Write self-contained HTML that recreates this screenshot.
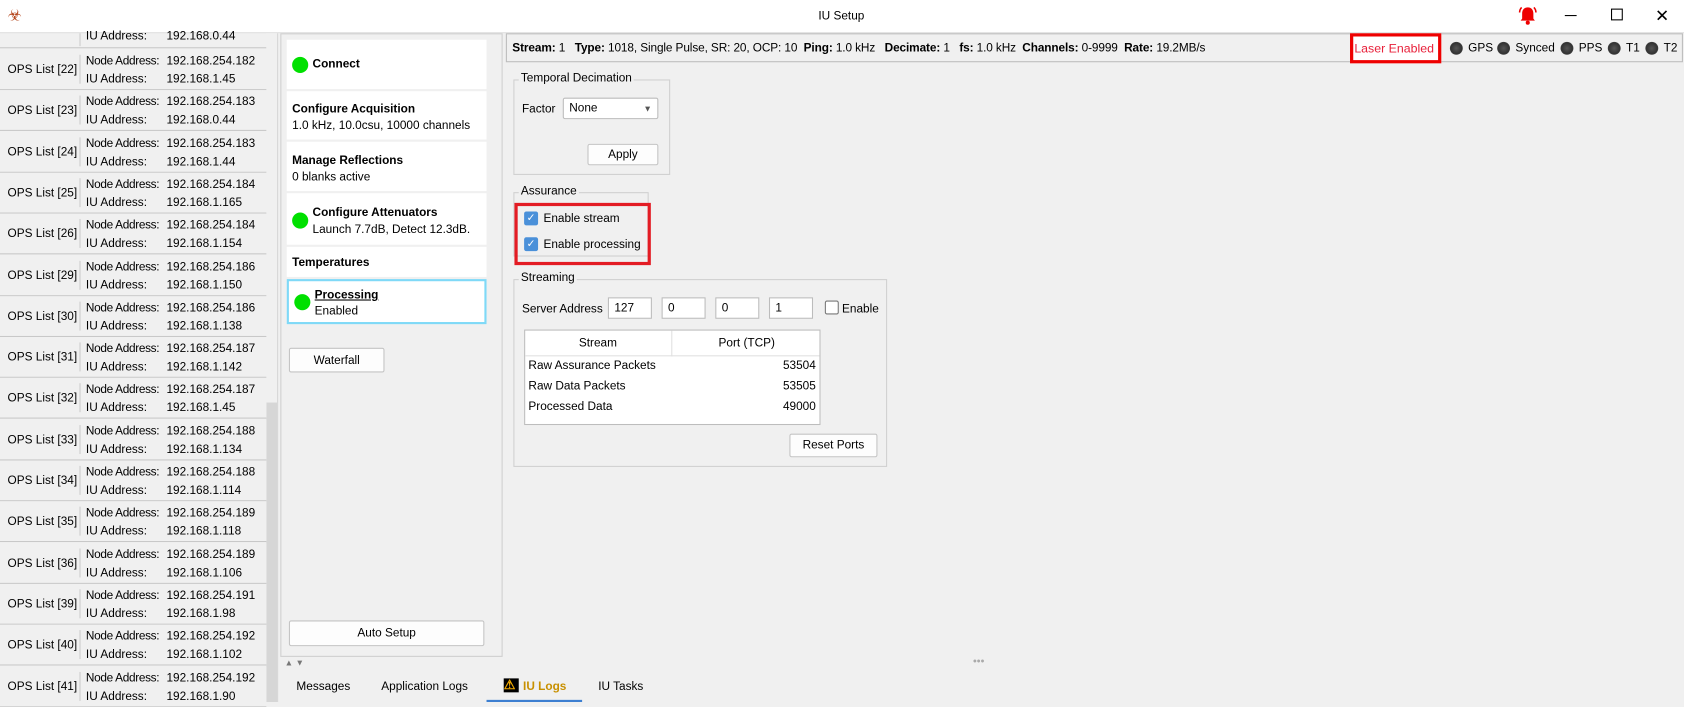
<!DOCTYPE html>
<html><head><meta charset="utf-8"><style>
*{box-sizing:border-box;margin:0;padding:0}
body{width:1684px;height:702px;overflow:hidden;background:#f0f0f0;font-family:"Liberation Sans",sans-serif;font-size:11px;color:#000}
#s{position:absolute;left:0;top:0;width:1568px;height:654px;transform:scale(1.074,1.0734);transform-origin:0 0;background:#f0f0f0}
.a{position:absolute;white-space:nowrap}
.row{position:absolute;left:0;width:248px;height:38px;border-bottom:1px solid #c8c8c8;background:#f0f0f0}
.row .l{position:absolute;left:7px;top:13px}
.row .v{position:absolute;left:74px;top:5px;bottom:5px;border-left:1px solid #ccc}
.row .n{position:absolute;left:80px;top:5px;letter-spacing:-0.3px}
.row .i{position:absolute;left:80px;top:22px}
.row .nv{position:absolute;left:155px;top:5px}
.row .iv{position:absolute;left:155px;top:22px}
.card{position:absolute;left:267px;width:186px;background:#fff}
.dot{position:absolute;width:15px;height:15px;border-radius:50%;background:#00e000}
.btn{position:absolute;background:#fdfdfd;border:1px solid #c4c4c4;border-radius:2px;text-align:center}
.grp{position:absolute;border:1px solid #d0d0d0}
.gt{position:absolute;top:-8px;left:4px;background:#f0f0f0;padding:0 2px}
.inp{position:absolute;background:#fff;border:1px solid #bcbcbc;height:20px;padding:0 5px;line-height:18px}
.cb{position:absolute;width:13px;height:13px;background:#4a90d9;border-radius:2px;color:#fff;font-size:10px;line-height:13px;text-align:center}
.led{position:absolute;top:39px;width:12px;height:12px;border-radius:50%;background:radial-gradient(#555,#333 60%,#777)}
</style></head><body><div id="s">
<div class="a" style="left:0;top:0;width:1568px;height:31px;background:#fff;border-bottom:1px solid #ddd"></div>
<div class="a" style="left:7px;top:5px;font-size:15px;color:#b5461c">☣</div>
<div class="a" style="left:762px;top:9px">IU Setup</div>
<svg class="a" style="left:1413px;top:5px" width="19" height="19" viewBox="0 0 20 20"><path d="M10 2c-4 0-5.5 3-5.5 6v5L3 15h14l-1.5-2V8c0-3-1.5-6-5.5-6z" fill="#e00"/><circle cx="10" cy="17" r="2" fill="#e00"/><path d="M2 7q0-3 2-5M18 7q0-3-2-5" stroke="#e00" stroke-width="1.5" fill="none"/></svg>
<div class="a" style="left:1457px;top:14px;width:11px;height:1px;background:#000"></div>
<div class="a" style="left:1500px;top:8px;width:11px;height:11px;border:1px solid #000"></div>
<div class="a" style="left:1541px;top:5px;font-size:16px">✕</div>

<div class="a" style="left:0;top:31px;width:248px;height:14px;border-bottom:1px solid #c8c8c8"><span class="a" style="left:80px;top:-3px">IU Address:</span><span class="a" style="left:155px;top:-3px">192.168.0.44</span><span class="a" style="left:74px;top:0;height:12px;border-left:1px solid #ccc"></span></div>
<div class="a" style="left:248px;top:31px;width:10px;height:623px;background:#f0f0f0"></div>
<div class="a" style="left:248px;top:375px;width:10px;height:279px;background:#d6d6d6"></div>
<div class="a" style="left:258px;top:31px;width:1px;height:623px;background:#d6d6d6"></div>

<div class="a" style="left:261px;top:31px;width:207px;height:581px;border:1px solid #cfcfcf"></div>
<div class="card" style="top:37px;height:46px"><div class="dot" style="left:5px;top:16px"></div><b class="a" style="left:24px;top:17px">Connect</b></div>
<div class="card" style="top:85px;height:45px"><b class="a" style="left:5px;top:11px">Configure Acquisition</b><span class="a" style="left:5px;top:26px">1.0 kHz, 10.0csu, 10000 channels</span></div>
<div class="card" style="top:132px;height:46px"><b class="a" style="left:5px;top:12px">Manage Reflections</b><span class="a" style="left:5px;top:27px">0 blanks active</span></div>
<div class="card" style="top:180px;height:48px"><div class="dot" style="left:5px;top:18px"></div><b class="a" style="left:24px;top:12px">Configure Attenuators</b><span class="a" style="left:24px;top:28px">Launch 7.7dB, Detect 12.3dB.</span></div>
<div class="card" style="top:230px;height:28px"><b class="a" style="left:5px;top:9px">Temperatures</b></div>
<div class="card" style="top:260px;height:42px;border:2px solid #7fd9f7"><div class="dot" style="left:5px;top:12px"></div><b class="a" style="left:24px;top:7px;text-decoration:underline">Processing</b><span class="a" style="left:24px;top:22px">Enabled</span></div>
<div class="btn" style="left:269px;top:324px;width:89px;height:23px;line-height:22px">Waterfall</div>
<div class="btn" style="left:269px;top:578px;width:182px;height:24px;line-height:23px">Auto Setup</div>
<div class="a" style="left:265px;top:613px;font-size:8px;color:#777">▲ ▼</div>
<div class="a" style="left:906px;top:611px;color:#aaa;font-size:10px">•••</div>
<div class="a" style="left:276px;top:634px">Messages</div>
<div class="a" style="left:355px;top:634px">Application Logs</div>
<div class="a" style="left:453px;top:628px;width:89px;height:26px;border-bottom:2px solid #3d7fd1"></div>
<div class="a" style="left:469px;top:632px;width:14px;height:13px;background:#000"></div>
<div class="a" style="left:469px;top:631px;color:#f0a800;font-size:12px;font-weight:bold">⚠</div>
<b class="a" style="left:487px;top:634px;color:#c89000">IU Logs</b>
<div class="a" style="left:557px;top:634px">IU Tasks</div>

<div class="a" style="left:471px;top:31px;width:1096px;height:27px;border:1px solid #bdbdbd"></div>
<div class="a" style="left:477px;top:39px;font-size:11px;letter-spacing:-0.1px"><b>Stream:</b> 1 &nbsp; <b>Type:</b> 1018, Single Pulse, SR: 20, OCP: 10 &nbsp;<b>Ping:</b> 1.0 kHz &nbsp; <b>Decimate:</b> 1 &nbsp; <b>fs:</b> 1.0 kHz &nbsp;<b>Channels:</b> 0-9999 &nbsp;<b>Rate:</b> 19.2MB/s</div>
<div class="a" style="left:1257px;top:31px;width:85px;height:28px;border:3px solid #e00;background:#fff;color:#e8203a;padding:6px 1px;font-size:11.5px">Laser Enabled</div>
<span class="led" style="left:1350px"></span><span class="a" style="left:1367px;top:39px">GPS</span>
<span class="led" style="left:1394px"></span><span class="a" style="left:1411px;top:39px">Synced</span>
<span class="led" style="left:1453px"></span><span class="a" style="left:1470px;top:39px">PPS</span>
<span class="led" style="left:1497px"></span><span class="a" style="left:1514px;top:39px">T1</span>
<span class="led" style="left:1532px"></span><span class="a" style="left:1549px;top:39px">T2</span>

<div class="grp" style="left:478px;top:74px;width:146px;height:89px"><span class="gt">Temporal Decimation</span></div>
<div class="a" style="left:486px;top:96px">Factor</div>
<div class="inp" style="left:524px;top:91px;width:89px;height:20px;border-radius:2px">None<span class="a" style="right:5px;top:1px;font-size:8px;color:#555">▼</span></div>
<div class="btn" style="left:547px;top:134px;width:66px;height:20px;line-height:19px">Apply</div>
<div class="grp" style="left:478px;top:179px;width:126px;height:60px"><span class="gt">Assurance</span></div>
<div class="a" style="left:479px;top:189px;width:127px;height:58px;border:3px solid #e31c24"></div>
<div class="cb" style="left:488px;top:197px">✓</div><div class="a" style="left:506px;top:198px">Enable stream</div>
<div class="cb" style="left:488px;top:221px">✓</div><div class="a" style="left:506px;top:222px">Enable processing</div>
<div class="grp" style="left:478px;top:260px;width:348px;height:175px"><span class="gt">Streaming</span></div>
<div class="a" style="left:486px;top:282px">Server Address</div>
<div class="inp" style="left:566px;top:277px;width:41px">127</div>
<div class="inp" style="left:616px;top:277px;width:41px">0</div>
<div class="inp" style="left:666px;top:277px;width:41px">0</div>
<div class="inp" style="left:716px;top:277px;width:41px">1</div>
<div class="a" style="left:768px;top:280px;width:13px;height:13px;border:1px solid #777;background:#fff;border-radius:2px"></div>
<div class="a" style="left:784px;top:282px">Enable</div>
<div class="a" style="left:488px;top:307px;width:276px;height:89px;background:#fff;border:1px solid #bdbdbd"></div>
<div class="a" style="left:489px;top:308px;width:274px;height:24px;border-bottom:1px solid #e0e0e0"></div>
<div class="a" style="left:625px;top:308px;width:1px;height:24px;background:#e0e0e0"></div>
<div class="a" style="left:539px;top:314px">Stream</div>
<div class="a" style="left:669px;top:314px">Port (TCP)</div>
<div class="a" style="left:492px;top:335px">Raw Assurance Packets</div><div class="a" style="left:729px;top:335px">53504</div>
<div class="a" style="left:492px;top:354px">Raw Data Packets</div><div class="a" style="left:729px;top:354px">53505</div>
<div class="a" style="left:492px;top:373px">Processed Data</div><div class="a" style="left:729px;top:373px">49000</div>
<div class="btn" style="left:735px;top:404px;width:82px;height:22px;line-height:21px">Reset Ports</div>

<div id="rows"></div>
</div>
<script>
var d=[[22,"182","1.45"],[23,"183","0.44"],[24,"183","1.44"],[25,"184","1.165"],[26,"184","1.154"],[29,"186","1.150"],[30,"186","1.138"],[31,"187","1.142"],[32,"187","1.45"],[33,"188","1.134"],[34,"188","1.114"],[35,"189","1.118"],[36,"189","1.106"],[39,"191","1.98"],[40,"192","1.102"],[41,"192","1.90"]];
var h="";d.forEach(function(r,k){h+='<div class="row" style="top:'+(46+k*38.3)+'px"><span class="l">OPS List ['+r[0]+']</span><span class="v"></span><span class="n">Node Address:</span><span class="nv">192.168.254.'+r[1]+'</span><span class="i">IU Address:</span><span class="iv">192.168.'+r[2]+'</span></div>';});
document.getElementById("rows").outerHTML=h;
</script>
</body></html>
